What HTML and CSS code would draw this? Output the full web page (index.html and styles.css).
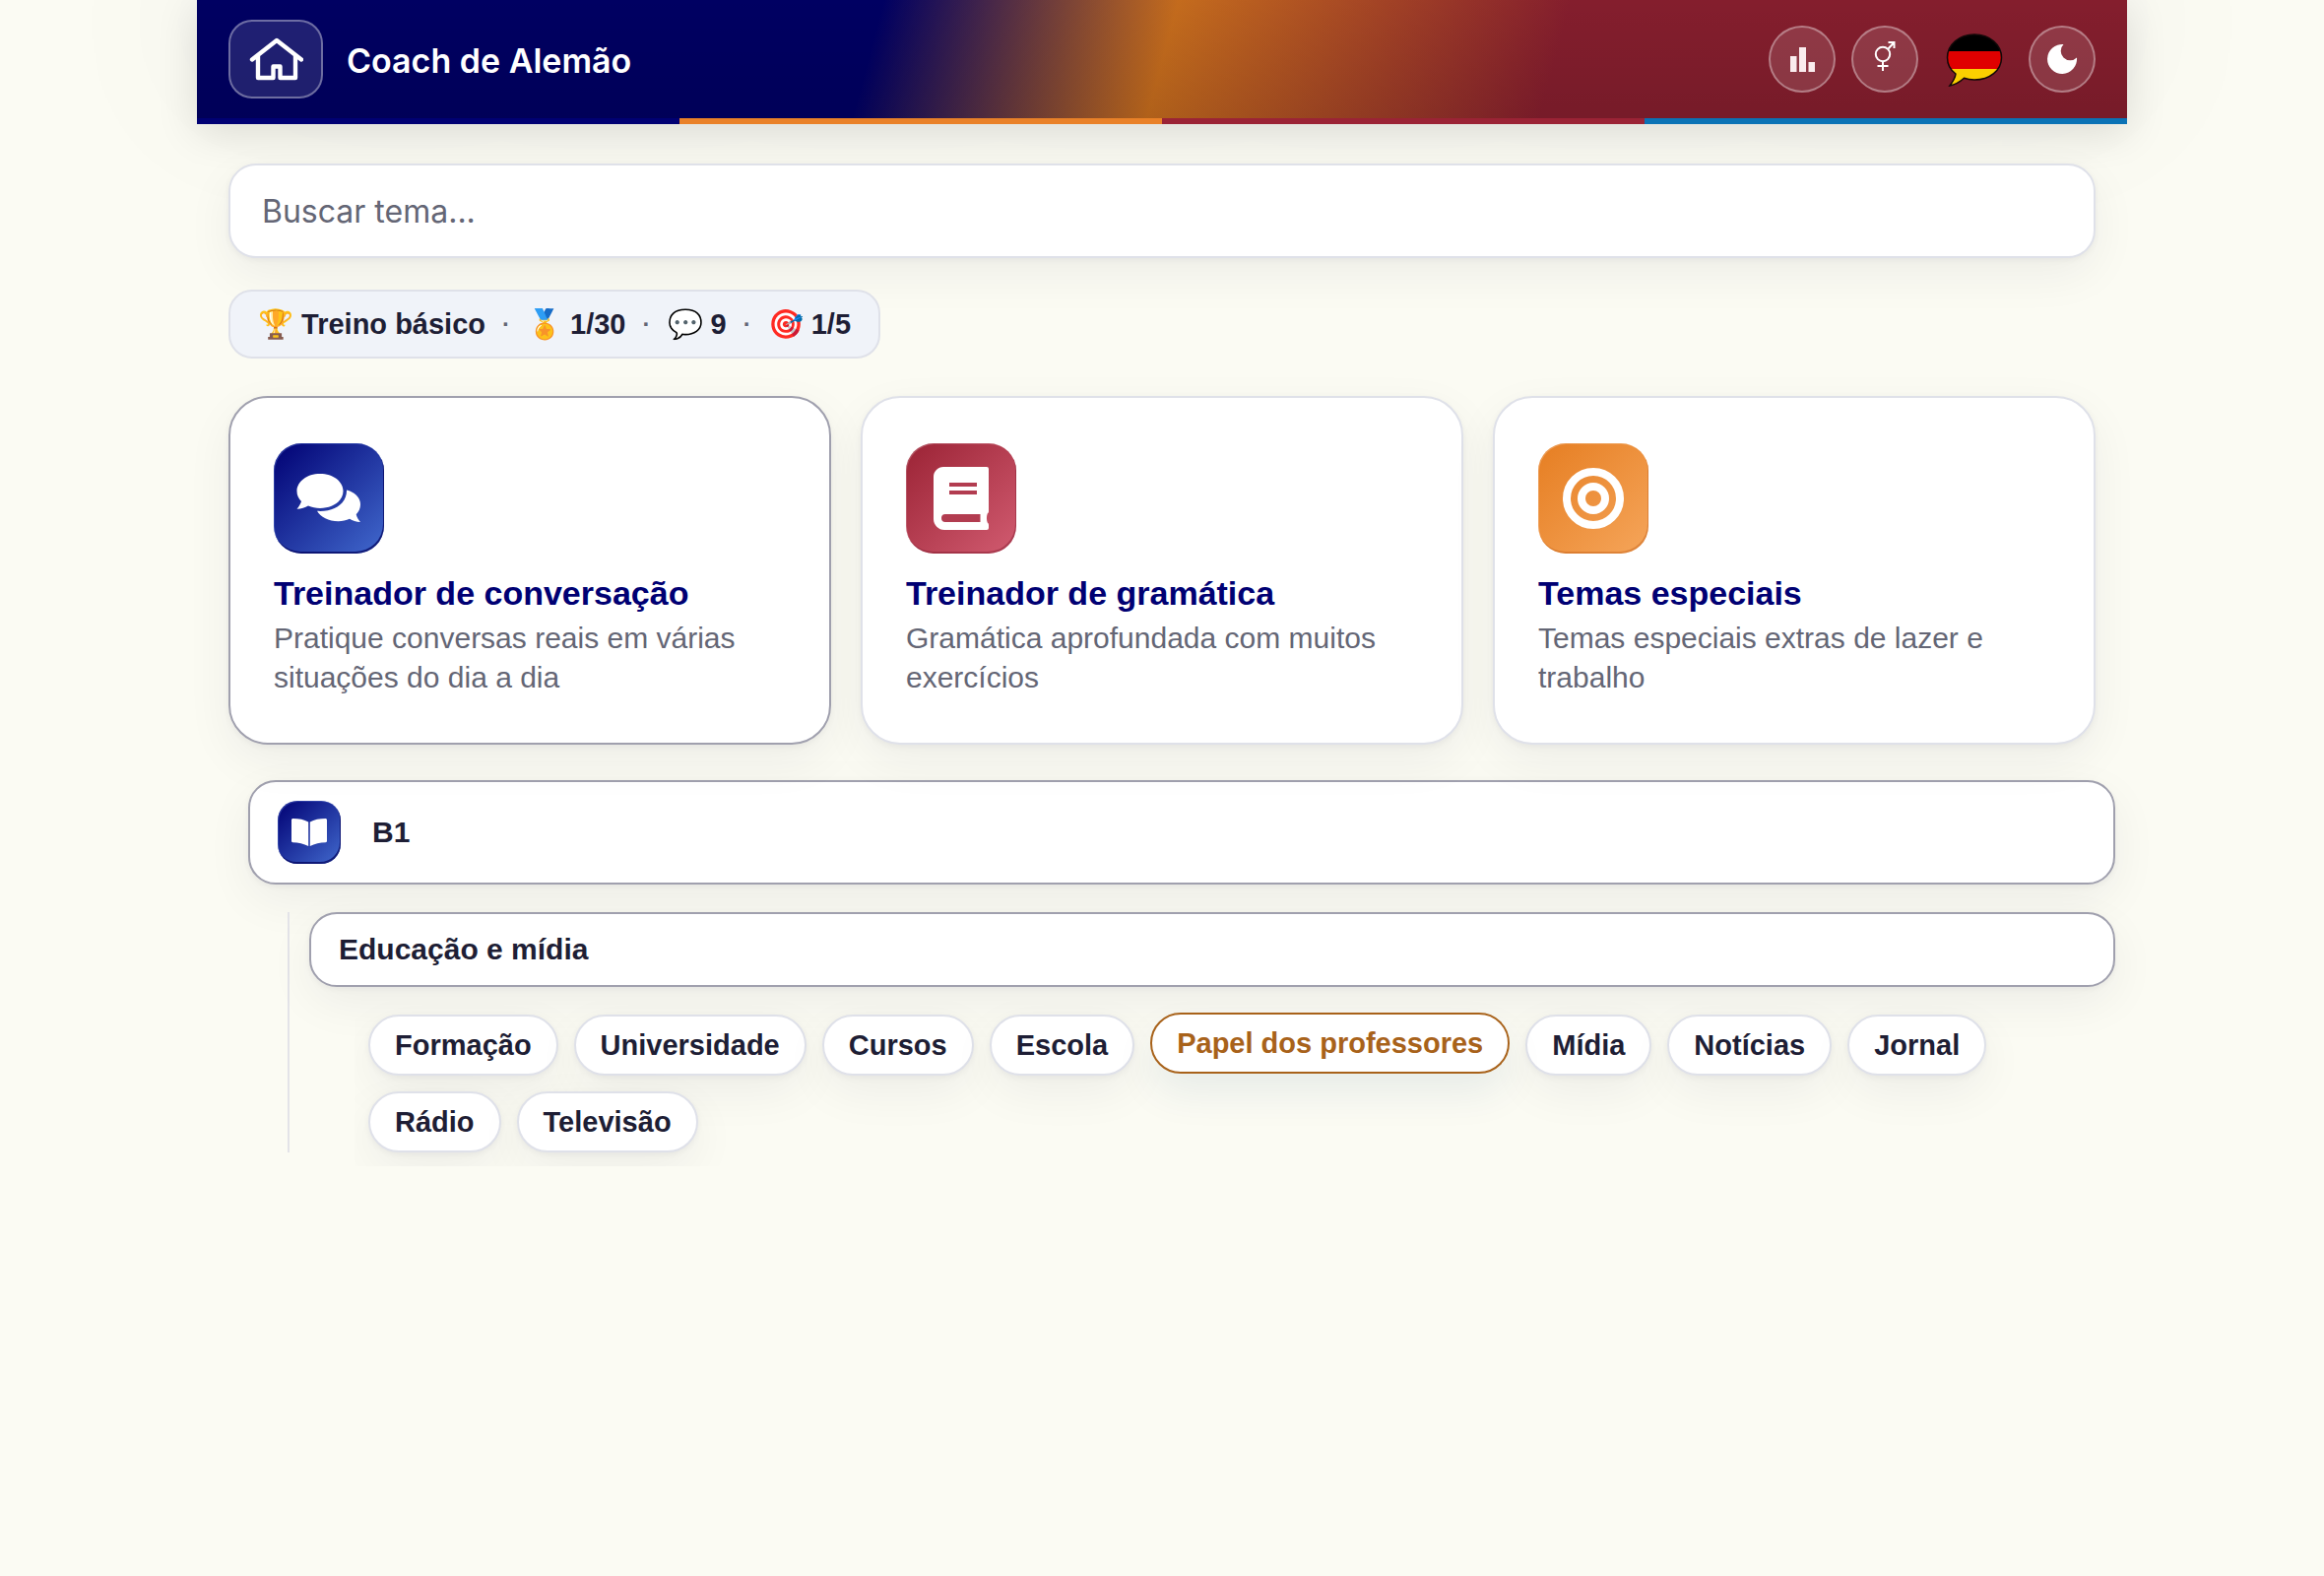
FILE: index.html
```html
<!DOCTYPE html>
<html lang="pt-BR">
<head>
<meta charset="utf-8">
<meta name="viewport" content="width=device-width, initial-scale=1">
<title>Coach de Alemão</title>
<link rel="stylesheet" href="styles.css">
</head>
<body>
<div class="app">
  <header class="topbar">
    <a class="home" href="#" aria-label="Início">
      <svg width="56" height="44" viewBox="-2 -1 56 44" fill="none" stroke="#fff" stroke-width="4.400" stroke-linecap="round" stroke-linejoin="round"><path d="M2 21.500 27 2l25 19.500M8 18v22h15.500V28.500h7V40H46V18"/></svg>
    </a>
    <h1 class="brand">Coach de Alemão</h1>
    <nav class="tools" aria-label="Ferramentas">
      <button class="tool" type="button" aria-label="Estatísticas">
        <svg width="28" height="28" viewBox="0 0 28 28" fill="#faecee"><path d="M2 11h6.500v16H2zM11 2h7v25h-7zM20.500 17H27v10h-6.500z"/></svg>
      </button>
      <button class="tool" type="button" aria-label="Gênero">
        <svg width="32" height="40" viewBox="0 0 32 40" fill="none" stroke="#fff" stroke-width="2"><circle cx="14" cy="15" r="7.200"/><path d="M14 22.200V32M8.500 27h11M19.500 9.500 25 3.500M19.500 3h6v6"/></svg>
      </button>
      <button class="flag" type="button" aria-label="Idioma: alemão">
        <svg width="60" height="56" viewBox="-1 -1.500 60 56"><defs><clipPath id="bubble"><path d="M30 1.500c15.500 0 27.500 10.500 27.500 23.500S45.500 47.500 30 47.500c-4 0-7.500-.6-10.500-1.700C15.500 49.500 10 52.500 5 53.500c3-4 5.500-7.500 6-12C5.500 37.500 2.500 31.500 2.500 25 2.500 12 14.500 1.500 30 1.500z"/></clipPath></defs><g clip-path="url(#bubble)"><path d="M0 0h60v18.500H0z"/><path fill="#e00000" d="M0 18.500h60v18H0z"/><path fill="#fbd000" d="M0 36.500h60V56H0z"/></g><path fill="none" stroke="#120808" stroke-width="1.500" d="M30 1.500c15.500 0 27.500 10.500 27.500 23.500S45.500 47.500 30 47.500c-4 0-7.500-.6-10.500-1.700C15.500 49.500 10 52.500 5 53.500c3-4 5.500-7.500 6-12C5.500 37.500 2.500 31.500 2.500 25 2.500 12 14.500 1.500 30 1.500z"/></svg>
      </button>
      <button class="tool" type="button" aria-label="Modo escuro">
        <svg width="32" height="32" viewBox="0 0 32 32" fill="#fff"><path d="M17.500 1A15 15 0 1 0 31 14.500 9.500 9.500 0 1 1 17.500 1z"/></svg>
      </button>
    </nav>
  </header>

  <main class="content">
    <input class="search" type="search" placeholder="Buscar tema..." aria-label="Buscar tema">

    <div class="progress">
      <span class="stat"><span class="emoji">🏆</span> Treino básico</span>
      <span class="dot">·</span>
      <span class="stat"><span class="emoji">🏅</span> 1/30</span>
      <span class="dot">·</span>
      <span class="stat"><span class="emoji">💬</span> 9</span>
      <span class="dot">·</span>
      <span class="stat"><span class="emoji">🎯</span> 1/5</span>
    </div>

    <div class="cards">
      <a class="card card-active" href="#">
        <span class="tile tile-blue"><svg width="68" height="56" viewBox="0 0 68 56" fill="#fff"><path d="M25 3C11.700 3 1.500 10.800 1.500 20.700c0 4 1.700 7.500 4.500 10.400C5.200 34 3.500 36.500 1.500 38.700c4.500 0 8.300-1.200 11.500-3.200 3.700 1.500 7.700 2.400 12 2.400 13.300 0 23.500-7.500 23.500-17.300S38.300 3 25 3z"/><path d="M52 19.500c8.500 2.200 14 7.800 14 14.700 0 4-1.700 7.300-4.300 10 .8 3 2.300 5.600 4.300 7.800-4.300 0-8-1.200-11-3.200-3.500 1.500-7.200 2.400-11.500 2.400-9.800 0-18-4.300-21.500-10.400 17.500 1.200 30.500-7.800 30-21.300z"/></svg></span>
        <strong class="card-title">Treinador de conversação</strong>
        <span class="card-text">Pratique conversas reais em várias situações do dia a dia</span>
      </a>
      <a class="card" href="#">
        <span class="tile tile-red"><svg width="56" height="64" viewBox="0 0 56 64"><path fill="#fff" d="M10 0h44a2 2 0 0 1 2 2v43c0 1-.5 2-1.300 2.500-1 3-1 6 0 9 .8.500 1.300 1.300 1.300 2.500v3a2 2 0 0 1-2 2H11C5 64 0 59 0 53V10C0 4.500 4.500 0 10 0z"/><path fill="#b23c50" d="M16 16h28v4H16zM16 24h28v4H16zM12 48h35.500v8H12a4 4 0 0 1 0-8z"/></svg></span>
        <strong class="card-title">Treinador de gramática</strong>
        <span class="card-text">Gramática aprofundada com muitos exercícios</span>
      </a>
      <a class="card" href="#">
        <span class="tile tile-orange"><svg width="64" height="64" viewBox="0 0 64 64" fill="none" stroke="#fff" stroke-width="8"><circle cx="32" cy="32" r="27"/><circle cx="32" cy="32" r="12"/></svg></span>
        <strong class="card-title">Temas especiais</strong>
        <span class="card-text">Temas especiais extras de lazer e trabalho</span>
      </a>
    </div>

    <section class="level">
      <button class="level-head" type="button">
        <span class="tile tile-small tile-blue"><svg width="36" height="30" viewBox="0 0 36 30" fill="#fff"><path d="M0 2.500C0 1.600.7 1 1.500 1 7.500 1 13 2 17.200 4.500V29C12.500 26.500 7 25.300 1.300 25.200.6 25.200 0 24.600 0 24zM36 2.500c0-.9-.7-1.500-1.500-1.500C28.500 1 23 2 18.800 4.500V29c4.700-2.500 10.200-3.700 15.900-3.800.7 0 1.300-.6 1.300-1.200z"/></svg></span>
        <span>B1</span>
      </button>
      <div class="branch">
        <button class="topic" type="button">Educação e mídia</button>
        <div class="chips">
          <button class="chip" type="button">Formação</button>
          <button class="chip" type="button">Universidade</button>
          <button class="chip" type="button">Cursos</button>
          <button class="chip" type="button">Escola</button>
          <button class="chip chip-current" type="button">Papel dos professores</button>
          <button class="chip" type="button">Mídia</button>
          <button class="chip" type="button">Notícias</button>
          <button class="chip" type="button">Jornal</button>
          <button class="chip" type="button">Rádio</button>
          <button class="chip" type="button">Televisão</button>
        </div>
      </div>
    </section>
  </main>
</div>
</body>
</html>
```
FILE: styles.css
```css
:root {
  --navy: #000073;
  --ink: #1e1e35;
  --muted: #646675;
  --line: #dfe1e9;
  --line-strong: #a0a0ae;
  --shadow: 0 2px 6px rgba(20, 20, 50, 0.05), 0 16px 48px rgba(20, 20, 50, 0.06);
}

* {
  box-sizing: border-box;
}

body {
  margin: 0;
  min-height: 100vh;
  background: #fbfbf3;
  color: var(--ink);
  font-family: "Liberation Sans", Arial, sans-serif;
}

button,
a {
  color: inherit;
  font: inherit;
  text-decoration: none;
  cursor: pointer;
}

svg {
  display: block;
}

.app {
  max-width: 1960px;
  margin: 0 auto;
}

.topbar {
  display: flex;
  align-items: center;
  padding: 20px 32px 26px;
  background:
    linear-gradient(90deg, #000073 25%, #e98128 25% 50%, #9b2335 50% 75%, #0a72b5 75%) bottom / 100% 6px no-repeat,
    linear-gradient(rgba(0, 0, 0, 0.15), rgba(0, 0, 0, 0.24)),
    linear-gradient(105deg, #000073 35%, #e67e22 50%, #9b2335 70%);
  box-shadow: 0 8px 40px rgba(0, 0, 0, 0.12), 0 -40px 200px rgba(20, 20, 80, 0.06);
}

.home {
  display: grid;
  place-items: center;
  width: 96px;
  height: 80px;
  border: 2px solid rgba(255, 255, 255, 0.35);
  border-radius: 24px;
  background: rgba(255, 255, 255, 0.12);
}

.brand {
  margin: 4px 0 0 24px;
  color: #fff;
  font: 600 34px/48px Inter, sans-serif;
}

.tools {
  display: flex;
  gap: 16px;
  margin-left: auto;
}

.tool,
.flag {
  display: grid;
  place-items: center;
  width: 68px;
  height: 68px;
  padding: 0;
  border: 2px solid rgba(255, 255, 255, 0.35);
  border-radius: 50%;
  background: rgba(255, 255, 255, 0.12);
}

.flag {
  width: 80px;
  border: 0;
  background: none;
}

.content {
  padding: 40px 32px;
}

.search {
  display: block;
  width: 100%;
  height: 96px;
  padding: 0 32px;
  border: 2px solid var(--line);
  border-radius: 28px;
  background: #fff;
  box-shadow: var(--shadow);
  color: var(--ink);
  font: 400 32px/40px Inter, sans-serif;
  appearance: none;
}

.search::placeholder {
  color: var(--muted);
  opacity: 1;
}

.progress {
  display: flex;
  align-items: center;
  gap: 17px;
  width: fit-content;
  margin-top: 32px;
  padding: 0 28px;
  border: 2px solid var(--line);
  border-radius: 24px;
  background: #f0f3f9;
  font-size: 29px;
  font-weight: 700;
  line-height: 66px;
}

.dot {
  color: var(--muted);
  font-size: 24px;
  line-height: 62px;
}

.cards {
  display: grid;
  grid-template-columns: repeat(3, 1fr);
  gap: 30px;
  margin-top: 38px;
}

.card {
  display: flex;
  flex-direction: column;
  padding: 46px 44px;
  border: 2px solid var(--line);
  border-radius: 40px;
  background: #fff;
  box-shadow: var(--shadow);
}

.card-active {
  border-color: var(--line-strong);
}

.tile {
  display: grid;
  place-items: center;
  width: 112px;
  height: 112px;
  border-radius: 28px;
}

.tile-small {
  width: 64px;
  height: 64px;
  border-radius: 20px;
}

.tile-blue {
  background: linear-gradient(135deg, #000073, #4169cd);
  box-shadow: inset 1px 1px 0 rgba(90, 120, 210, 0.4), inset -1px -2px 0 rgba(0, 0, 90, 0.7);
}

.tile-red {
  background: linear-gradient(135deg, #9b2335, #d15b70);
  box-shadow: inset 1px 1px 0 rgba(255, 255, 255, 0.2), inset -1px -2px 0 rgba(120, 20, 40, 0.4);
}

.tile-orange {
  background: linear-gradient(135deg, #e67e22, #f5a55a);
  box-shadow: inset 1px 1px 0 rgba(255, 255, 255, 0.2), inset -1px -2px 0 rgba(190, 90, 20, 0.4);
}

.card-title {
  margin-top: 18px;
  color: var(--navy);
  font-size: 34px;
  line-height: 44px;
}

.card-text {
  margin-top: 4px;
  color: var(--muted);
  font-size: 30px;
  line-height: 40px;
}

.level {
  margin: 36px -20px 0 20px;
}

.level-head,
.topic {
  display: flex;
  align-items: center;
  gap: 32px;
  width: 100%;
  padding: 19px 28px;
  border: 2px solid var(--line-strong);
  border-radius: 28px;
  background: #fff;
  box-shadow: var(--shadow);
  font-size: 30px;
  font-weight: 700;
  line-height: 36px;
}

.branch {
  display: flow-root;
  margin: 28px 0 0 40px;
  padding-left: 20px;
  border-left: 2px solid #e3e3e8;
}

.topic {
  padding: 18px 28px;
}

.chips {
  display: flex;
  flex-wrap: wrap;
  gap: 16px;
  margin: 14px 0 -14px 46px;
  padding: 14px 0 14px 14px;
  overflow: clip;
}

.chip {
  padding: 12px 25px;
  border: 2px solid var(--line);
  border-radius: 31px;
  background: #fff;
  box-shadow: var(--shadow);
  font-size: 29px;
  font-weight: 700;
  line-height: 34px;
}

.chip-current {
  border-color: #a8621a;
  color: #a8621a;
  box-shadow: 0 20px 40px rgba(0, 60, 120, 0.08);
  transform: translateY(-2px);
}
```
